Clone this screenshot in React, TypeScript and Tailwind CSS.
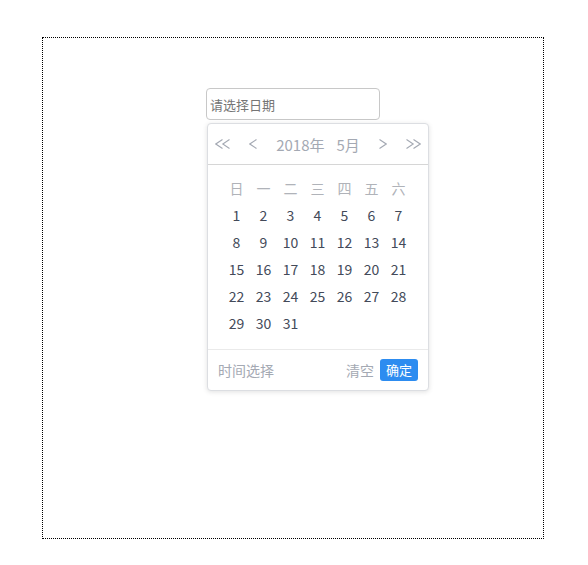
import React from "react";

const days = Array.from({ length: 31 }, (_, i) => i + 1);
const weeks = ["日", "一", "二", "三", "四", "五", "六"];

function Chev({ dir, double }: { dir: "l" | "r"; double?: boolean }) {
  const w = double ? 15 : 8;
  const paths =
    dir === "l"
      ? double
        ? ["M7.5 0.5 L0.8 5 L7.5 9.5", "M14.5 0.5 L7.8 5 L14.5 9.5"]
        : ["M7.5 0.5 L0.8 5 L7.5 9.5"]
      : double
      ? ["M0.5 0.5 L7.2 5 L0.5 9.5", "M7.5 0.5 L14.2 5 L7.5 9.5"]
      : ["M0.5 0.5 L7.2 5 L0.5 9.5"];
  return (
    <svg width={w} height={10} viewBox={`0 0 ${w} 10`} className="block">
      {paths.map((d, i) => (
        <path key={i} d={d} fill="none" stroke="#a4a9b3" strokeWidth="1.1" />
      ))}
    </svg>
  );
}

export default function App() {
  return (
    <div
      className="w-[588px] h-[565px] bg-white pl-[42px] pt-[37px]"
      style={{ fontFamily: '"Microsoft YaHei","Noto Sans CJK SC",sans-serif' }}
    >
      <div className="w-[502px] h-[502px] border border-dotted border-black pl-[163px] pt-[50px]">
        <input
          placeholder="请选择日期"
          className="block w-[174px] h-[32px] border border-[#c8c8c8] rounded-[4px] pl-[3px] text-[13px] outline-none placeholder:text-[#757575]"
        />
        <div className="mt-[3px] ml-[1px] w-[222px] border border-[#dcdee2] rounded-[4px] bg-white shadow-[0_1px_5px_rgba(0,0,0,0.12)]">
          <div className="flex items-center h-[41px] px-[7px] border-b border-[#d6d6d6] text-[15px] text-[#a4a9b3]">
            <Chev dir="l" double />
            <span className="ml-[19px]">
              <Chev dir="l" />
            </span>
            <div className="flex-1 flex justify-center items-center leading-none">
              <span>2018年</span>
              <span className="ml-[12px]">5月</span>
            </div>
            <Chev dir="r" />
            <span className="ml-[19px]">
              <Chev dir="r" double />
            </span>
          </div>
          <div className="pt-[10px] pb-[12px] px-[15px] border-b border-[#eaeaea]">
            <div className="grid grid-cols-[repeat(7,27px)] auto-rows-[27px] text-[14px]">
              {weeks.map((w) => (
                <div key={w} className="flex items-center justify-center text-[#b0b3b9]">
                  {w}
                </div>
              ))}
              {days.map((d) => (
                <div key={d} className="flex items-center justify-center text-[#434a59]">
                  {d}
                </div>
              ))}
            </div>
          </div>
          <div className="flex items-center h-[40px] pl-[10px] pr-[10px] text-[14px] text-[#a4a9b3]">
            <span>时间选择</span>
            <span className="ml-auto">清空</span>
            <span className="ml-[6px] h-[22px] w-[38px] rounded-[3px] bg-[#2d8cf0] text-white text-[13px] flex items-center justify-center">
              确定
            </span>
          </div>
        </div>
      </div>
    </div>
  );
}
